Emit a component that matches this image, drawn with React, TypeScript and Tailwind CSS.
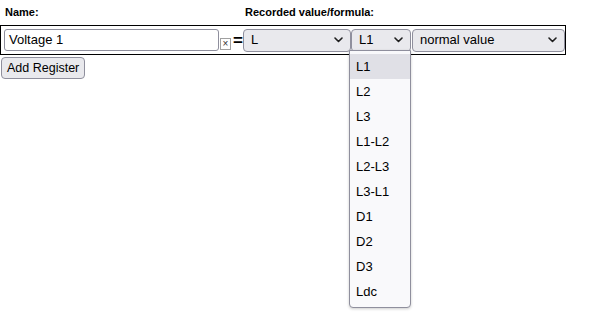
import React from 'react';

function Chevron() {
  return (
    <svg width="9" height="6" viewBox="0 0 9 6" className="shrink-0">
      <path d="M1 1 L4.5 4.5 L8 1" fill="none" stroke="#1f1f1f" strokeWidth="1.6" strokeLinecap="round" strokeLinejoin="round" />
    </svg>
  );
}

function Select({ value, className }: { value: string; className: string }) {
  return (
    <div
      className={`flex items-center justify-between h-[23px] bg-[#e9e9ed] border border-[#8f8f9d] rounded-[4px] pl-[7px] pr-[7px] text-[13px] text-black ${className}`}
    >
      <span>{value}</span>
      <Chevron />
    </div>
  );
}

const options = ['L1', 'L2', 'L3', 'L1-L2', 'L2-L3', 'L3-L1', 'D1', 'D2', 'D3', 'Ldc'];

export default function App() {
  return (
    <div className="relative w-[599px] h-[315px] bg-white text-black" style={{ fontFamily: '"Liberation Sans", Arial, sans-serif' }}>
      {/* Labels */}
      <div className="flex items-center h-[25px] text-[11px] font-bold">
        <span className="pl-[5px] w-[245px]">Name:</span>
        <span>Recorded value/formula:</span>
      </div>

      {/* Register row */}
      <div className="flex items-center w-[566px] h-[30px] border border-black pl-[3px]">
        <div className="flex items-center w-[215px] h-[22px] border border-[#8f8f9d] rounded-[3px] pl-[4px] text-[13px]">
          Voltage 1
        </div>
        <div className="flex items-center justify-center w-[11px] h-[12px] ml-[1px] mt-[7px] border border-[#a0a0a0] text-[10px] leading-none text-[#333]">
          ×
        </div>
        <span className="w-[10px] ml-[2px] text-[17px] font-bold leading-none">=</span>
        <Select value="L" className="w-[108px]" />
        <Select value="L1" className="w-[60px]" />
        <Select value="normal value" className="w-[153px] ml-[1px]" />
      </div>

      {/* Add button */}
      <button className="mt-[1px] ml-[1px] h-[22px] px-[5px] bg-[#e9e9ed] border border-[#8f8f9d] rounded-[4px] text-[12.5px] text-black">
        Add Register
      </button>

      {/* Open dropdown */}
      <div className="absolute left-[349px] top-[50px] w-[62px] h-[258px] pt-[3px] bg-[#f9f9fb] border border-[#8f8f9d] rounded-b-[4px] shadow-[0_1px_3px_rgba(0,0,0,0.2)] text-[13px]">
        {options.map((o, i) => (
          <div key={o} className={`flex items-center h-[25px] pl-[6px] ${i === 0 ? 'bg-[#e0e0e6]' : ''}`}>
            {o}
          </div>
        ))}
      </div>
    </div>
  );
}
